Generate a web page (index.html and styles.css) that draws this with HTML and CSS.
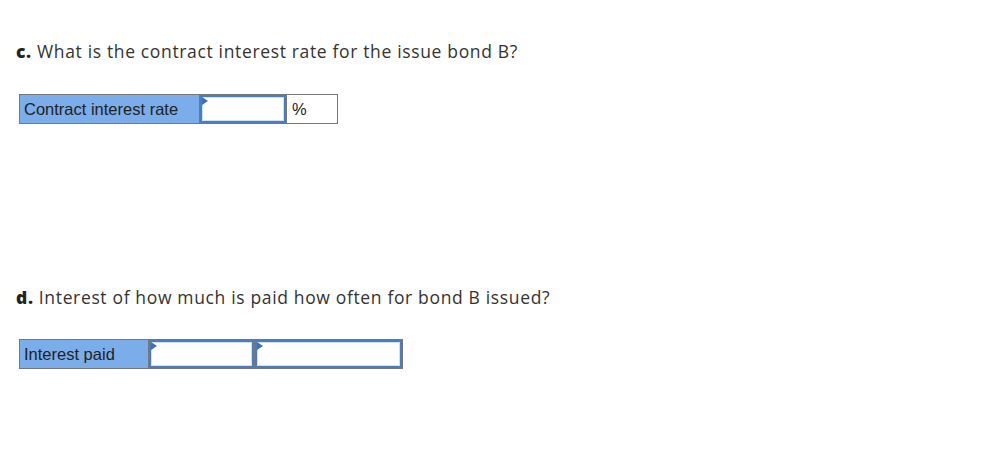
FILE: index.html
```html
<!DOCTYPE html>
<html>
<head>
<meta charset="utf-8">
<link rel="stylesheet" href="styles.css">
</head>
<body>
<div class="page">
  <div class="part part-c">
    <p class="question"><b>c.</b> What is the contract interest rate for the issue bond B?</p>
    <table class="grid">
      <tr>
        <td class="label w-c">Contract interest rate</td>
        <td class="input w-rate"><span class="flag"></span></td>
        <td class="unit">%</td>
      </tr>
    </table>
  </div>
  <div class="part part-d">
    <p class="question"><b>d.</b> Interest of how much is paid how often for bond B issued?</p>
    <table class="grid">
      <tr>
        <td class="label w-d">Interest paid</td>
        <td class="input w-amt"><span class="flag"></span></td>
        <td class="input w-freq"><span class="flag"></span></td>
      </tr>
    </table>
  </div>
</div>
</body>
</html>
```
FILE: styles.css
```css
html, body {
  margin: 0;
  padding: 0;
  background: #fff;
}
.page {
  padding: 39px 0 0 16px;
  font-family: "Open Sans", Lato, sans-serif;
  color: #333;
}
.part-d {
  margin-top: 161px;
}
.question {
  margin: 0;
  font-size: 17.5px;
  line-height: 24px;
  letter-spacing: 0.65px;
}
.question b {
  font-weight: 800;
  color: #222;
}
.grid {
  margin: 31px 0 0 3px;
  border-collapse: collapse;
  border: 1px solid #777;
  font-family: "Liberation Sans", Arial, sans-serif;
  font-size: 16.5px;
  color: #222;
}
.part-d .grid {
  margin-top: 30px;
}
.grid td {
  border: 1px solid #777;
  height: 29px;
  padding: 0;
  vertical-align: middle;
  box-sizing: border-box;
}
.label {
  background: #7badea;
  padding: 0 4px !important;
}
.w-c { width: 180px; }
.w-d { width: 129px; }
.input {
  position: relative;
  background: #fff;
  box-shadow: inset 0 0 0 2px #4a7dc0, inset 0 0 0 3px #cfe0f4;
}
.w-rate { width: 87px; }
.w-amt { width: 106px; }
.w-freq { width: 148px; }
.unit {
  width: 51px;
  padding-left: 5px !important;
}
.flag {
  position: absolute;
  left: 2px;
  top: 2px;
  width: 0;
  height: 0;
  border-top: 4px solid transparent;
  border-bottom: 4px solid transparent;
  border-left: 6px solid #3d6fb6;
}
```
